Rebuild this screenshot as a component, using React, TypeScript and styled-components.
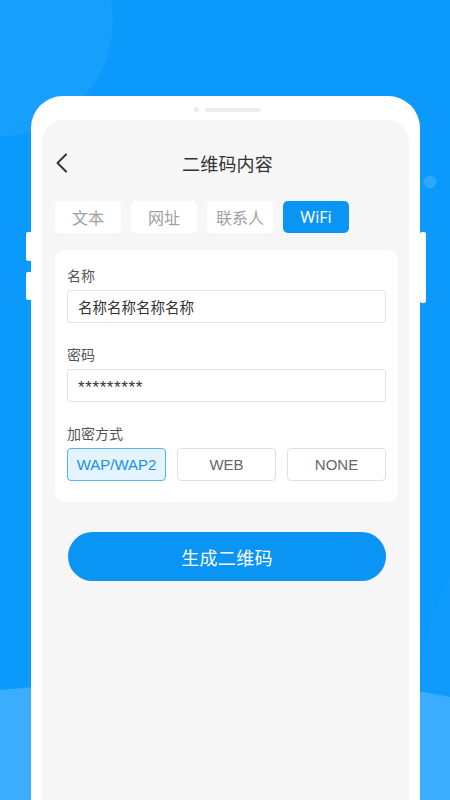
import React from "react";
import styled, { createGlobalStyle } from "styled-components";

const Global = createGlobalStyle`
  html, body { margin: 0; padding: 0; }
  body { font-family: "Noto Sans CJK SC", "Noto Sans", sans-serif; }
  * { box-sizing: border-box; }
`;

const Stage = styled.div`
  position: relative;
  width: 450px;
  height: 800px;
  overflow: hidden;
  background: #0b9afc;
`;

const Backdrop = styled.svg`
  position: absolute;
  inset: 0;
  width: 450px;
  height: 800px;
`;

const Phone = styled.div`
  position: relative;
  margin: 96px 0 0 31px;
  width: 389px;
  height: 740px;
  background: #ffffff;
  border-radius: 32px 32px 0 0;
  padding: 24px 11px 0;
`;

const SideKey = styled.div<{ $side: "left" | "right"; $top: number; $h: number }>`
  position: absolute;
  top: ${(p) => p.$top}px;
  ${(p) => (p.$side === "left" ? "left: -5px;" : "right: -6px;")}
  width: 6px;
  height: ${(p) => p.$h}px;
  background: #ffffff;
  border-radius: 2px;
`;

const Speaker = styled.div`
  position: absolute;
  top: 11px;
  left: 163px;
  display: flex;
  align-items: center;
  gap: 6px;
`;

const SpeakerDot = styled.span`
  width: 5px;
  height: 5px;
  border-radius: 50%;
  background: #ececec;
`;

const SpeakerBar = styled.span`
  width: 56px;
  height: 4px;
  border-radius: 2px;
  background: #ececec;
`;

const Screen = styled.div`
  height: 100%;
  background: #f6f6f6;
  border-radius: 22px 22px 0 0;
  padding: 24px 11px 0 13px;
  display: flex;
  flex-direction: column;
`;

const Header = styled.div`
  position: relative;
  height: 38px;
  display: flex;
  align-items: center;
  justify-content: center;
`;

const Back = styled.svg`
  position: absolute;
  left: 0;
  top: 9px;
  width: 13px;
  height: 20px;
`;

const Title = styled.h1`
  margin: 0;
  font-size: 18px;
  font-weight: 400;
  color: #333333;
  letter-spacing: 0.2px;
  margin-left: 2px;
`;

const Tabs = styled.div`
  display: flex;
  gap: 10px;
  margin-top: 19px;
`;

const Tab = styled.div<{ $active?: boolean }>`
  width: 66px;
  height: 32px;
  border-radius: 5px;
  display: flex;
  align-items: center;
  justify-content: center;
  font-size: 16px;
  color: ${(p) => (p.$active ? "#ffffff" : "#a0a0a0")};
  background: ${(p) => (p.$active ? "#0a94f3" : "#ffffff")};
  font-family: ${(p) => (p.$active ? '"Noto Sans", "Noto Sans CJK SC", sans-serif' : "inherit")};
`;

const Card = styled.div`
  margin-top: 17px;
  background: #ffffff;
  border-radius: 10px;
  padding: 15px 12px 21px;
  display: flex;
  flex-direction: column;
`;

const Label = styled.div<{ $first?: boolean }>`
  font-size: 14px;
  line-height: 20px;
  color: #555555;
  margin-top: ${(p) => (p.$first ? 0 : 21)}px;
  margin-bottom: 5px;
`;

const Field = styled.div<{ $stars?: boolean }>`
  height: 33px;
  border: 1px solid #e3e3e3;
  border-radius: 3px;
  padding: 0 10px;
  display: flex;
  align-items: center;
  font-size: ${(p) => (p.$stars ? 17 : 14.5)}px;
  color: #333333;
  letter-spacing: ${(p) => (p.$stars ? 0.6 : 0)}px;
  font-family: ${(p) => (p.$stars ? '"Liberation Sans", sans-serif' : "inherit")};
  padding-top: ${(p) => (p.$stars ? 4 : 0)}px;
`;

const Options = styled.div`
  display: grid;
  grid-template-columns: repeat(3, 1fr);
  gap: 11px;
`;

const Option = styled.div<{ $active?: boolean }>`
  height: 33px;
  border-radius: 4px;
  border: 1px solid ${(p) => (p.$active ? "#58b2f2" : "#e0e0e0")};
  background: ${(p) => (p.$active ? "#e3f3ff" : "#ffffff")};
  color: ${(p) => (p.$active ? "#1990e6" : "#666666")};
  display: flex;
  align-items: center;
  justify-content: center;
  font-family: "Liberation Sans", "Noto Sans", sans-serif;
  font-size: 15px;
`;

const Generate = styled.button`
  margin: 30px 12px 0 13px;
  height: 49px;
  border: none;
  border-radius: 25px;
  background: #0a94f3;
  color: #ffffff;
  font-family: "Noto Sans CJK SC", sans-serif;
  font-size: 18px;
  letter-spacing: 0.3px;
  display: flex;
  align-items: center;
  justify-content: center;
  padding: 0;
`;

export default function App() {
  return (
    <>
      <Global />
      <Stage>
        <Backdrop viewBox="0 0 450 800">
          <circle cx="-4" cy="20" r="117" fill="#ffffff" opacity="0.05" />
          <circle cx="430" cy="182" r="6.5" fill="#ffffff" opacity="0.14" />
          <ellipse cx="560" cy="700" rx="140" ry="200" fill="#ffffff" opacity="0.02" />
          <path d="M0 690 Q 60 684 110 684 L 340 684 Q 400 686 450 697 L 450 800 L 0 800 Z" fill="#3aadff" />
        </Backdrop>
        <Phone>
          <SideKey $side="left" $top={136} $h={29} />
          <SideKey $side="left" $top={176} $h={28} />
          <SideKey $side="right" $top={136} $h={71} />
          <Speaker>
            <SpeakerDot />
            <SpeakerBar />
          </Speaker>
          <Screen>
            <Header>
              <Back viewBox="0 0 13 20">
                <path d="M11 1.5 L2.5 10 L11 18.5" fill="none" stroke="#333333" strokeWidth="2" strokeLinecap="round" strokeLinejoin="round" />
              </Back>
              <Title>二维码内容</Title>
            </Header>
            <Tabs>
              <Tab>文本</Tab>
              <Tab>网址</Tab>
              <Tab>联系人</Tab>
              <Tab $active>WiFi</Tab>
            </Tabs>
            <Card>
              <Label $first>名称</Label>
              <Field>名称名称名称名称</Field>
              <Label>密码</Label>
              <Field $stars>*********</Field>
              <Label>加密方式</Label>
              <Options>
                <Option $active>WAP/WAP2</Option>
                <Option>WEB</Option>
                <Option>NONE</Option>
              </Options>
            </Card>
            <Generate>生成二维码</Generate>
          </Screen>
        </Phone>
      </Stage>
    </>
  );
}
